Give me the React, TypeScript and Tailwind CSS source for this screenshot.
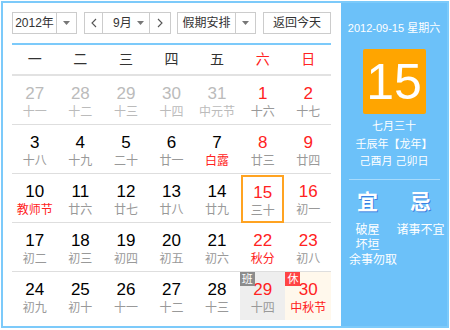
import React from "react";

type Day = {
  n: number;
  lunar: string;
  other?: boolean;
  red?: boolean;
  fest?: boolean;
  today?: boolean;
  badge?: "班" | "休";
};

const weeks: Day[][] = [
  [
    { n: 27, lunar: "十一", other: true },
    { n: 28, lunar: "十二", other: true },
    { n: 29, lunar: "十三", other: true },
    { n: 30, lunar: "十四", other: true },
    { n: 31, lunar: "中元节", other: true },
    { n: 1, lunar: "十六", red: true },
    { n: 2, lunar: "十七", red: true },
  ],
  [
    { n: 3, lunar: "十八" },
    { n: 4, lunar: "十九" },
    { n: 5, lunar: "二十" },
    { n: 6, lunar: "廿一" },
    { n: 7, lunar: "白露", fest: true },
    { n: 8, lunar: "廿三", red: true },
    { n: 9, lunar: "廿四", red: true },
  ],
  [
    { n: 10, lunar: "教师节", fest: true },
    { n: 11, lunar: "廿六" },
    { n: 12, lunar: "廿七" },
    { n: 13, lunar: "廿八" },
    { n: 14, lunar: "廿九" },
    { n: 15, lunar: "三十", red: true, today: true },
    { n: 16, lunar: "初一", red: true },
  ],
  [
    { n: 17, lunar: "初二" },
    { n: 18, lunar: "初三" },
    { n: 19, lunar: "初四" },
    { n: 20, lunar: "初五" },
    { n: 21, lunar: "初六" },
    { n: 22, lunar: "秋分", red: true, fest: true },
    { n: 23, lunar: "初八", red: true },
  ],
  [
    { n: 24, lunar: "初九" },
    { n: 25, lunar: "初十" },
    { n: 26, lunar: "十一" },
    { n: 27, lunar: "十二" },
    { n: 28, lunar: "十三" },
    { n: 29, lunar: "十四", red: true, badge: "班" },
    { n: 30, lunar: "中秋节", red: true, fest: true, badge: "休" },
  ],
];

const Caret = () => (
  <svg width="7" height="4" viewBox="0 0 7 4" className="text-[#777]">
    <path d="M0 0h7L3.5 4z" fill="currentColor" />
  </svg>
);

const Chevron = ({ dir }: { dir: "l" | "r" }) => (
  <svg width="6" height="10" viewBox="0 0 6 10">
    <path
      d={dir === "l" ? "M5 1L1 5l4 4" : "M1 1l4 4-4 4"}
      stroke="#555"
      strokeWidth="1.1"
      fill="none"
    />
  </svg>
);

const DayCell = ({ d }: { d: Day }) => {
  const numColor = d.other ? "text-[#bbb]" : d.red ? "text-[#f22]" : "text-black";
  const lunarColor = d.fest ? "text-[#f22]" : d.other ? "text-[#bbb]" : "text-[#999]";
  const bg =
    d.badge === "班" ? "bg-[#eeeeee]" : d.badge === "休" ? "bg-[#fff8ec]" : "";
  return (
    <div className={`relative h-[48px] ${bg}`}>
      {d.badge && (
        <span
          className={`absolute left-0 top-0 flex h-[14px] w-[15px] items-center justify-center text-[11px] leading-none text-white ${
            d.badge === "班" ? "bg-[#8c8c8c]" : "bg-[#f44]"
          }`}
        >
          {d.badge}
        </span>
      )}
      <div
        className={`flex h-full flex-col items-center ${
          d.today ? "mx-[1px] mt-[1px] h-[47px] border-2 border-[#ffa321] pt-[6px]" : "pt-[8px]"
        }`}
      >
        <span className={`text-[17px] leading-[20px] ${numColor}`}>{d.n}</span>
        <span className={`text-[12px] leading-[17px] ${lunarColor}`}>{d.lunar}</span>
      </div>
    </div>
  );
};

export default function App() {
  return (
    <div
      className="h-[330px] w-[450px] bg-white p-[1px]"
      style={{ fontFamily: '"Liberation Sans", "Noto Sans CJK SC", sans-serif' }}
    >
      <div className="flex h-[327px] w-[448px] border-2 border-[#7ccafa]">
        {/* Calendar */}
        <div className="w-[338px] pl-[9px] pt-[9px]">
          {/* Controls */}
          <div className="flex h-[22px] text-[12px] text-[#333]">
            <div className="flex w-[65px] border border-[#ccc]">
              <span className="flex flex-1 items-center justify-center">2012年</span>
              <span className="flex w-[20px] items-center justify-center border-l border-[#ccc]">
                <Caret />
              </span>
            </div>
            <div className="ml-[7px] flex w-[87px] border border-[#ccc]">
              <span className="flex w-[18px] items-center justify-center border-r border-[#ccc]">
                <Chevron dir="l" />
              </span>
              <span className="flex flex-1 items-center justify-between pl-[10px] pr-[5px]">
                9月
                <Caret />
              </span>
              <span className="flex w-[21px] items-center justify-center border-l border-[#ccc]">
                <Chevron dir="r" />
              </span>
            </div>
            <div className="ml-[6px] flex w-[79px] border border-[#ccc]">
              <span className="flex flex-1 items-center justify-center">假期安排</span>
              <span className="flex w-[20px] items-center justify-center border-l border-[#ccc]">
                <Caret />
              </span>
            </div>
            <div className="ml-[7px] flex w-[68px] items-center justify-center border border-[#ccc]">
              返回今天
            </div>
          </div>

          <div className="mt-[9px] w-[319px] border-t-2 border-[#7ccafa]" />

          {/* Week header */}
          <div className="grid h-[31px] w-[319px] grid-cols-7 border-b-2 border-[#e2e2e2] text-[14px]">
            {["一", "二", "三", "四", "五", "六", "日"].map((w, i) => (
              <div
                key={w}
                className={`flex items-center justify-center ${
                  i >= 5 ? "text-[#f22]" : "text-[#333]"
                }`}
              >
                {w}
              </div>
            ))}
          </div>

          {/* Days */}
          <div className="w-[319px]">
            {weeks.map((wk, i) => (
              <div
                key={i}
                className={`grid grid-cols-7 ${
                  i < weeks.length - 1 ? "border-b border-[#dedede]" : ""
                }`}
              >
                {wk.map((d, j) => (
                  <DayCell key={j} d={d} />
                ))}
              </div>
            ))}
          </div>
        </div>

        {/* Side panel */}
        <div className="flex flex-1 flex-col items-center bg-[#6cc1f9] text-white">
          <div className="mt-[18px] text-[11px] leading-[14px]">2012-09-15 星期六</div>
          <div className="mt-[14px] flex h-[65px] w-[63px] items-center justify-center rounded-[2px] bg-[#ffa500] text-[50px] leading-none">
            15
          </div>
          <div className="mt-[4px] flex flex-col items-center text-[11px] leading-[17.5px]">
            <span>七月三十</span>
            <span>壬辰年【龙年】</span>
            <span>己酉月 己卯日</span>
          </div>
          <div className="mt-[8px] w-[91px] border-t border-[#a8dbfc]" />
          <div className="mt-[10px] flex w-full text-[12px] leading-[15px]">
            <div className="flex w-1/2 flex-col items-center">
              <span
                className="mb-[9px] text-[21px] font-bold leading-[24px]"
                style={{ textShadow: "1px 1px 0 #3d7fe0" }}
              >
                宜
              </span>
              <span>破屋</span>
              <span>坏垣</span>
            </div>
            <div className="flex w-1/2 flex-col items-center">
              <span
                className="mb-[9px] text-[21px] font-bold leading-[24px]"
                style={{ textShadow: "1px 1px 0 #3d7fe0" }}
              >
                忌
              </span>
              <span>诸事不宜</span>
            </div>
          </div>
          <div className="w-full pl-[8px] text-[12px] leading-[15px]">余事勿取</div>
        </div>
      </div>
    </div>
  );
}
